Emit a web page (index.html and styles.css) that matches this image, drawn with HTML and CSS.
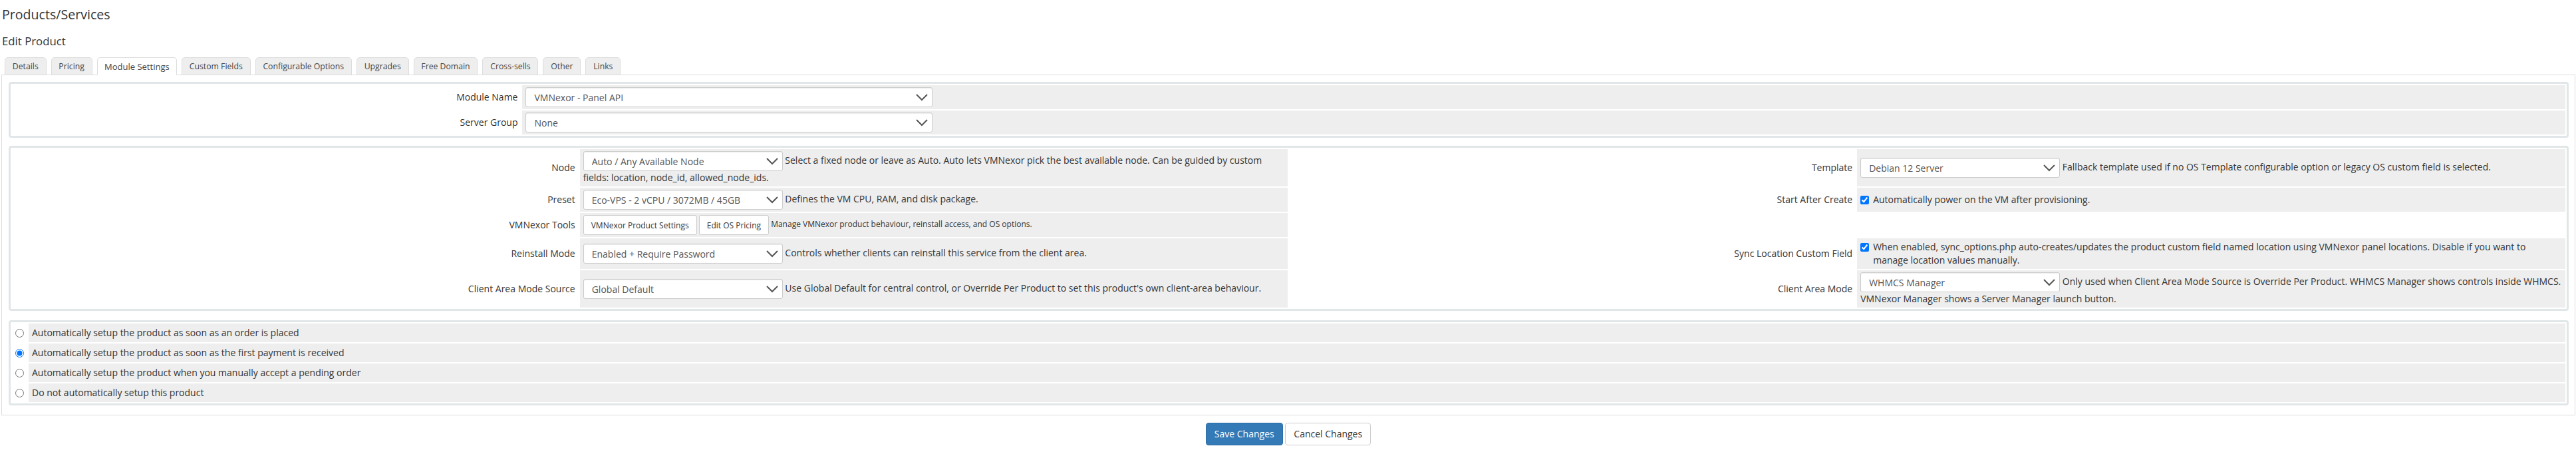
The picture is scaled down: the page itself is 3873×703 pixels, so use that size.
FILE: index.html
```html
<!DOCTYPE html>
<html lang="en">
<head>
<meta charset="utf-8">
<title>Edit Product</title>
<link rel="stylesheet" href="styles.css">
</head>
<body>
<h1 class="page-title">Products/Services</h1>
<h2 class="page-subtitle">Edit Product</h2>
<ul class="tabs">
  <li class="tab">Details</li>
  <li class="tab">Pricing</li>
  <li class="tab tab-active">Module Settings</li>
  <li class="tab">Custom Fields</li>
  <li class="tab">Configurable Options</li>
  <li class="tab">Upgrades</li>
  <li class="tab">Free Domain</li>
  <li class="tab">Cross-sells</li>
  <li class="tab">Other</li>
  <li class="tab">Links</li>
</ul>
<div class="pane">
  <div class="panel">
    <table class="form form-wide">
      <tr>
        <td class="label">Module Name</td>
        <td class="field"><select class="sel sel-xl"><option>VMNexor - Panel API</option></select></td>
      </tr>
      <tr>
        <td class="label">Server Group</td>
        <td class="field"><select class="sel sel-xl"><option>None</option></select></td>
      </tr>
    </table>
  </div>
  <div class="panel panel-settings">
    <table class="form form-split">
      <tr>
        <td class="label">Node</td>
        <td class="field"><select class="sel"><option>Auto / Any Available Node</option></select> Select a fixed node or leave as Auto. Auto lets VMNexor pick the best available node. Can be guided by custom fields: location, node_id, allowed_node_ids.</td>
        <td class="label">Template</td>
        <td class="field"><select class="sel"><option>Debian 12 Server</option></select> Fallback template used if no OS Template configurable option or legacy OS custom field is selected.</td>
      </tr>
      <tr>
        <td class="label">Preset</td>
        <td class="field"><select class="sel"><option>Eco-VPS - 2 vCPU / 3072MB / 45GB</option></select> Defines the VM CPU, RAM, and disk package.</td>
        <td class="label">Start After Create</td>
        <td class="field"><label class="check"><input type="checkbox" checked><span>Automatically power on the VM after provisioning.</span></label></td>
      </tr>
      <tr>
        <td class="label">VMNexor Tools</td>
        <td class="field field-small"><button class="btn-small" type="button">VMNexor Product Settings</button> <button class="btn-small" type="button">Edit OS Pricing</button> Manage VMNexor product behaviour, reinstall access, and OS options.</td>
        <td class="blank"></td>
        <td class="blank"></td>
      </tr>
      <tr>
        <td class="label">Reinstall Mode</td>
        <td class="field"><select class="sel"><option>Enabled + Require Password</option></select> Controls whether clients can reinstall this service from the client area.</td>
        <td class="label">Sync Location Custom Field</td>
        <td class="field"><label class="check"><input type="checkbox" checked><span>When enabled, sync_options.php auto-creates/updates the product custom field named location using VMNexor panel locations. Disable if you want to manage location values manually.</span></label></td>
      </tr>
      <tr>
        <td class="label">Client Area Mode Source</td>
        <td class="field"><select class="sel"><option>Global Default</option></select> Use Global Default for central control, or Override Per Product to set this product's own client-area behaviour.</td>
        <td class="label">Client Area Mode</td>
        <td class="field"><select class="sel"><option>WHMCS Manager</option></select> Only used when Client Area Mode Source is Override Per Product. WHMCS Manager shows controls inside WHMCS. VMNexor Manager shows a Server Manager launch button.</td>
      </tr>
    </table>
  </div>
  <div class="panel">
    <table class="form form-radio">
      <tr>
        <td class="radio-cell"><input type="radio" name="setup"></td>
        <td class="radio-text">Automatically setup the product as soon as an order is placed</td>
      </tr>
      <tr>
        <td class="radio-cell"><input type="radio" name="setup" checked></td>
        <td class="radio-text">Automatically setup the product as soon as the first payment is received</td>
      </tr>
      <tr>
        <td class="radio-cell"><input type="radio" name="setup"></td>
        <td class="radio-text">Automatically setup the product when you manually accept a pending order</td>
      </tr>
      <tr>
        <td class="radio-cell"><input type="radio" name="setup"></td>
        <td class="radio-text">Do not automatically setup this product</td>
      </tr>
    </table>
  </div>
</div>
<div class="actions">
  <button class="btn btn-primary" type="button">Save Changes</button>
  <button class="btn btn-default" type="button">Cancel Changes</button>
</div>
</body>
</html>
```
FILE: styles.css
```css
* { box-sizing: border-box; }
html, body { margin: 0; background: #fff; }
body {
  padding: 0 1px 0 2px;
  font-family: "Open Sans", sans-serif;
  font-size: 14px;
  line-height: 20px;
  color: #333;
}
.page-title {
  margin: 0;
  padding: 8px 0 0 1px;
  font-size: 19.6px;
  line-height: 28px;
  font-weight: 400;
}
.page-subtitle {
  margin: 0;
  padding: 14px 0 0 1px;
  font-size: 16.8px;
  line-height: 24px;
  font-weight: 400;
}
.tabs {
  display: flex;
  gap: 7px;
  list-style: none;
  margin: 0 0 -1px;
  padding: 12px 0 0 5px;
  position: relative;
}
.tab {
  height: 27px;
  padding: 3px 10.8px 0;
  font-size: 12.25px;
  line-height: 20px;
  color: #444;
  background: #eee;
  border: 1px solid #ddd;
  border-radius: 5px 5px 0 0;
}
.tab-active {
  padding: 3px 10.3px 0;
  font-size: 13px;
  background: #fff;
  border-bottom-color: #fff;
}
.pane {
  border: 1px solid #ddd;
  padding: 10px 9px 14px 10px;
}
.panel {
  border: 3px solid #e1e6e8;
  border-radius: 4px;
  margin-bottom: 12px;
  background: #fff;
}
.panel-settings { margin-bottom: 14px; }
.panel:last-child { margin-bottom: 0; }
.form {
  width: 100%;
  table-layout: fixed;
  border-collapse: separate;
  border-spacing: 2px;
}
.form td { vertical-align: middle; }
.label {
  padding: 3px 5px;
  text-align: right;
}
.form-wide .label { width: 19.95%; }
.form-split td:nth-child(odd) { width: 22.22%; }
.form-split td:nth-child(even) { width: 27.78%; }
.field {
  padding: 3px 5px;
  background: #eee;
}
.field-small { font-size: 12px; }
.blank { background: #fff; }
.sel {
  appearance: none;
  width: 300px;
  height: 30px;
  padding: 4px 36px 4px 12px;
  vertical-align: middle;
  font-family: "Open Sans", sans-serif;
  font-size: 14px;
  color: #555;
  background: #fff url("data:image/svg+xml,%3Csvg xmlns='http://www.w3.org/2000/svg' width='18' height='11' viewBox='0 0 18 11'%3E%3Cpath d='M1 1l8 8 8-8' fill='none' stroke='%23555' stroke-width='2'/%3E%3C/svg%3E") no-repeat right 6px center;
  border: 1px solid #ccc;
  border-radius: 3px;
  box-shadow: inset 0 1px 1px rgba(0, 0, 0, .075);
}
.sel-xl { width: 612px; }
.btn-small {
  height: 30px;
  padding: 0 11px;
  vertical-align: middle;
  font-family: "Open Sans", sans-serif;
  font-size: 12px;
  color: #333;
  background: #fff;
  border: 1px solid #ccc;
  border-radius: 3px;
}
.check {
  display: flex;
  align-items: flex-start;
  gap: 6px;
}
.check input {
  flex: none;
  width: 13px;
  height: 13px;
  margin: 4px 0 0;
}
.radio-cell {
  width: 23px;
  text-align: center;
  padding: 0;
}
.radio-cell input {
  display: block;
  width: 13px;
  height: 13px;
  margin: 0 auto;
}
.radio-text {
  height: 28px;
  padding: 3px 5px;
  background: #eee;
}
.actions {
  padding-top: 11px;
  text-align: center;
}
.btn {
  height: 34px;
  padding: 6px 12px;
  font-family: "Open Sans", sans-serif;
  font-size: 14px;
  line-height: 20px;
  border: 1px solid #ccc;
  border-radius: 4px;
}
.btn-primary {
  color: #fff;
  background: #337ab7;
  border-color: #2e6da4;
}
.btn-default {
  color: #333;
  background: #fff;
}
```
